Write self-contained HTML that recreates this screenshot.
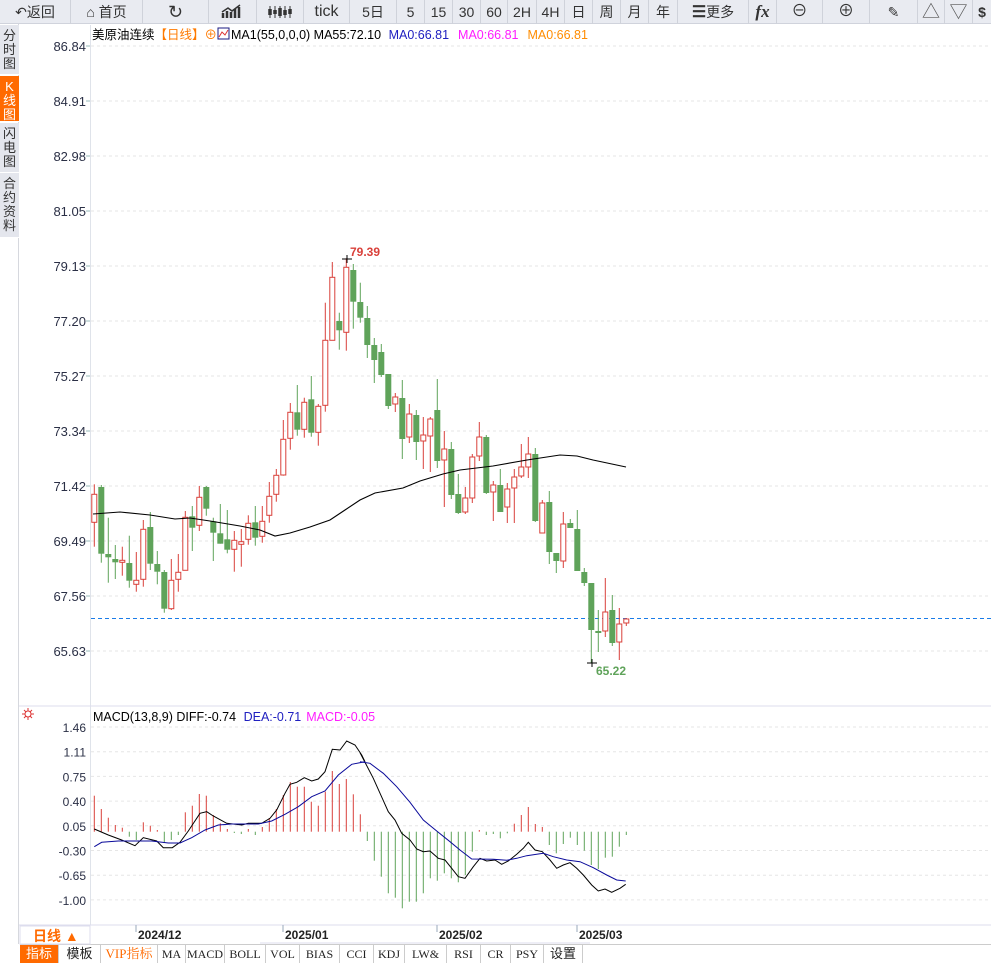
<!DOCTYPE html>
<html><head><meta charset="utf-8">
<style>
*{margin:0;padding:0;box-sizing:border-box}
body{width:991px;height:965px;overflow:hidden;background:#fff;font-family:"Liberation Sans","Noto Sans CJK SC",sans-serif;position:relative}
#tb{position:absolute;left:0;top:0;width:991px;height:24px;background:#e9ebf1;border-bottom:1px solid #d0d3dc}
#tb div{position:absolute;top:0;height:24px;border-right:1px solid #cfd2da;font-size:14px;color:#333;text-align:center;line-height:24px}
#side{position:absolute;left:0;top:24px;width:19px;height:920px;background:#fff;border-right:1px solid #d6d8de}
#side div{position:absolute;left:0;width:19px;background:#e4e6ed;font-size:13px;line-height:14px;text-align:center;color:#333;border-bottom:1px solid #fff;padding-top:4px}
#bt{position:absolute;left:20px;top:945px;height:18px;display:flex;font-family:"Liberation Serif","Noto Serif CJK SC",serif;font-size:12px}
#bt div{border-right:1px solid #ccc;text-align:center;line-height:18px;color:#222;background:#fff}
svg{position:absolute;left:0;top:0}
</style></head><body>
<div id="tb">
<div style="left:0;width:71px">↶返回</div>
<div style="left:71px;width:72px">⌂ 首页</div>
<div style="left:143px;width:66px;font-size:18px">↻</div>
<div style="left:209px;width:48px"><svg width="48" height="24" style="position:static"><path d="M14 18V13M18 18V11M22 18V12M26 18V9M30 18V7" stroke="#333" stroke-width="2.5"/><path d="M13 12L19 8L23 11L31 5" stroke="#333" fill="none" stroke-width="1.5"/></svg></div>
<div style="left:257px;width:47px"><svg width="47" height="24" style="position:static"><path d="M13 6V18M18 6V18M23 6V18M28 6V18M33 6V18" stroke="#333" stroke-width="1"/><path d="M13 9V15M18 10V14M23 8V16M28 10V15M33 9V14" stroke="#333" stroke-width="3.5"/></svg></div>
<div style="left:304px;width:46px;font-size:16px">tick</div>
<div style="left:350px;width:47px">5日</div>
<div style="left:397px;width:28px">5</div>
<div style="left:425px;width:28px">15</div>
<div style="left:453px;width:28px">30</div>
<div style="left:481px;width:27px">60</div>
<div style="left:508px;width:29px">2H</div>
<div style="left:537px;width:28px">4H</div>
<div style="left:565px;width:28px">日</div>
<div style="left:593px;width:28px">周</div>
<div style="left:621px;width:28px">月</div>
<div style="left:649px;width:29px">年</div>
<div style="left:678px;width:71px"><b style="font-size:16px">☰</b>更多</div>
<div style="left:749px;width:28px;font-family:'Liberation Serif',serif;font-style:italic;font-weight:bold;font-size:17px">fx</div>
<div style="left:777px;width:46px;font-size:16px">⊖</div>
<div style="left:823px;width:47px;font-size:16px">⊕</div>
<div style="left:870px;width:48px">✎</div>
<div style="left:918px;width:27px;font-size:18px;color:#555">△</div>
<div style="left:945px;width:28px;font-size:18px;color:#555">▽</div>
<div style="left:973px;width:18px;font-weight:bold;border:none">$</div>
</div>
<div id="side">
<div style="top:1px;height:50px">分<br>时<br>图</div>
<div style="top:52px;height:46px;background:#ff6a00;color:#fff">K<br>线<br>图</div>
<div style="top:99px;height:50px">闪<br>电<br>图</div>
<div style="top:149px;height:65px">合<br>约<br>资<br>料</div>
</div>
<svg id="s" width="991" height="965" style="left:0;top:0"></svg>
<div id="bt">
<div style="width:39px;background:#ff6a00;color:#fff;font-family:'Liberation Sans','Noto Sans CJK SC',sans-serif;font-size:13px">指标</div>
<div style="width:42px;font-family:'Liberation Sans','Noto Sans CJK SC',sans-serif;font-size:13px">模板</div>
<div style="width:57px;color:#ff6a00;font-size:13px">VIP指标</div>
<div style="width:28px">MA</div>
<div style="width:39px">MACD</div>
<div style="width:41px">BOLL</div>
<div style="width:34px">VOL</div>
<div style="width:40px">BIAS</div>
<div style="width:34px">CCI</div>
<div style="width:31px">KDJ</div>
<div style="width:42px">LW&amp;</div>
<div style="width:34px">RSI</div>
<div style="width:30px">CR</div>
<div style="width:33px">PSY</div>
<div style="width:39px;font-family:'Liberation Sans','Noto Sans CJK SC',sans-serif;font-size:13px">设置</div>
</div>
<script>
var C=[
['r',494.3,522.3,484.3,546.7],['g',487,553.7,485,562.7],['g',554,557.3,517.7,582.7],['g',559,562.3,545,579],['r',560.3,562.3,546.7,575.7],
['g',563,580.7,535.7,587.7],['r',580.3,584.3,552,591.7],['r',529.3,579.3,520,586.7],['g',527,563.7,512,570],['g',564,571.7,551,584.3],
['g',572,608.7,570,612.7],['r',580.3,608.7,559,610],['r',572.3,579.3,554,591.7],['r',517.3,570.3,511,570.3],['g',516.3,527.7,506,551],
['r',497.3,525.3,486,531],['g',487,508.7,486,515.7],['g',521.3,532.7,517.7,561],['g',533.3,543.7,504,543.7],['g',539.3,549.7,510,553.3],
['r',540.3,549.3,531,571.7],['r',541.7,544.3,529,566.7],['r',523.3,539.3,515.3,544.7],['g',522.3,537.7,506,545.7],['r',521.3,536.3,506,542.7],
['r',496.3,515.3,482,522.7],['r',475.3,494.3,469,501.7],['r',439.3,475,420,475.7],['r',412.3,438.3,403,449.7],['g',412.3,429.7,385,435.7],
['r',402.3,429.3,397.7,437.7],['g',399.3,432.7,376,436.7],['r',406.3,432.3,404,445.7],['r',340.3,405.3,302.7,411.7],['r',277.3,340.3,262,340.3],
['g',321,330.3,312.7,349.7],['r',267.3,332.3,258.3,350.7],['g',270,301.7,264,328.7],['g',302,317.7,282.7,322.7],['g',318,345,306,358],
['g',345,360,338,383],['g',352,375,344,377],['g',374,406,374,409],['r',397,404,393,412],['g',398,439,380,459],
['r',414,437,404,443],['g',415,442,410,460],['r',435,441,417,469],['r',419,436,417,472],['g',410,461,379,468],
['r',449,460,431,507],['g',449,495,442,499],['g',494,513,474,514],['r',498,512,487,514],['r',457,498,454,503],
['r',437,456,422,461],['g',437,493,435,494],['r',485,492,481,521],['g',485,512,469,512],['r',489,507,483,523],
['r',477,488,469,523],['r',467,476,444,478],['r',454,467,437,478],['g',454,521,448,522],['r',503,533,500,533],
['g',502,552,491,564],['g',553,561,553,573],['r',524,561,512,568],['g',523,528,519,528],['g',529,571,510,571],
['g',572,583,568,586],['g',583,630,583,663],['g',631,633,610,652],['r',612,631,578,637],['g',610,643,595,646],
['r',624,642,608,660],['r',619,623,618,626]];
var H=[795.7,809,817.7,825,827.7,-836.7,-840,822.3,825.7,830,-842,-840,-835,812.3,805.7,794,795.7,815,823.3,829,-833,-834,829,-835,827,818,809,795,782,786.7,786.7,801.7,805.7,791.7,771,784,779,794.3,814.3,
-841,-860.7,-876.7,-893.3,-897.7,-908.3,-901.7,-901.7,-893.3,-878.3,-880.7,-873.3,-878.3,-882.3,-875,-851.7,830,-835,-834,-838.3,-833.3,823.7,815,807,824,827,-845,-853.3,-844,-837.7,-845,-850.7,-865,-869,-857.7,-856.7,-846.7,-835];
var o='';
var L=['86.84','84.91','82.98','81.05','79.13','77.20','75.27','73.34','71.42','69.49','67.56','65.63'];
for(var i=0;i<12;i++){var y=46+i*55;o+='<line x1="91" y1="'+y+'" x2="991" y2="'+y+'" stroke="#e6e6e6" stroke-dasharray="3,3"/><text x="86" y="'+(y+5)+'" font-size="13" text-anchor="end" fill="#2a2f45">'+L[i]+'</text><line x1="86" y1="'+y+'" x2="90" y2="'+y+'" stroke="#9bb" />';}
var M=['1.46','1.11','0.75','0.40','0.05','-0.30','-0.65','-1.00'];
for(i=0;i<8;i++){var y=727+i*24.7;o+='<line x1="91" y1="'+y+'" x2="991" y2="'+y+'" stroke="#e6e6e6" stroke-dasharray="3,3"/><text x="86" y="'+(y+5)+'" font-size="12" text-anchor="end" fill="#2a2f45">'+M[i]+'</text>';}
o+='<line x1="90.5" y1="25" x2="90.5" y2="925" stroke="#dfe3ea"/>';
o+='<line x1="19" y1="706" x2="991" y2="706" stroke="#dde"/><line x1="19" y1="925" x2="991" y2="925" stroke="#dde"/><line x1="20" y1="944.5" x2="991" y2="944.5" stroke="#ccc"/>';
o+='<line x1="91" y1="618.5" x2="991" y2="618.5" stroke="#1a7ce8" stroke-dasharray="4,3"/>';
for(i=0;i<C.length;i++){var c=C[i],x=94.3+7*i,col=c[0]=='r'?'#d9403a':'#5fa35a';
o+='<line x1="'+x+'" y1="'+c[3]+'" x2="'+x+'" y2="'+c[4]+'" stroke="'+col+'"/>';
var h=Math.max(c[2]-c[1],1.5);
if(c[0]=='r')o+='<rect x="'+(x-2.5)+'" y="'+c[1]+'" width="5" height="'+h+'" fill="#fff" stroke="'+col+'"/>';
else o+='<rect x="'+(x-3)+'" y="'+c[1]+'" width="6" height="'+h+'" fill="'+col+'"/>';}
o+='<polyline fill="none" stroke="#000" stroke-width="1.1" points="93,514 120,512 150,515 175,519 190,518 210,521 240,526 260,530 275,536 290,533 310,527 330,520 345,510 360,500 375,493 403,488 420,481 443,474 460,470 493,466 527,460 560,455 577,456 593,460 626,467"/>';
for(i=0;i<H.length;i++){var x=94.3+7*i,v=H[i],z=831.7;
if(v>0)o+='<line x1="'+x+'" y1="'+v+'" x2="'+x+'" y2="'+z+'" stroke="#d9403a"/>';else o+='<line x1="'+x+'" y1="'+z+'" x2="'+x+'" y2="'+(-v)+'" stroke="#5fa35a"/>';}
function pl(a,ox,col){var p='';for(var k=0;k<a.length;k+=2)p+=(ox+a[k]/3).toFixed(1)+','+(705+a[k+1]/3).toFixed(1)+' ';return '<polyline fill="none" stroke="'+col+'" points="'+p+'"/>';}
o+=pl([28,372,70,390,110,405,150,422,175,398,215,408,235,428,262,428,285,412,310,378,345,325,365,320,385,333,425,355,470,360,490,355,530,355,555,340,575,315,600,265,615,238,635,232,658,218,680,228,700,222,720,200,742,133,765,135,785,108,810,120,830,150,840,170],85,'#000');
o+=pl([0,143,40,220,85,320,105,345,125,385,150,405,170,432,190,440,210,438,235,460,255,465,275,490,295,515,315,520,340,485,360,460,380,468,405,465,425,478,445,468,470,448,490,430,505,412,525,435,547,440,570,465,590,490,610,480,630,473,650,490,670,510,695,540,715,558,735,552,755,562,780,550,797,538],360,'#000');
o+=pl([28,425,50,412,100,408,200,408,250,414,285,414,320,398,360,375,400,360,440,357,520,357,560,348,600,328,640,305,680,275,720,258,760,210,800,178,840,170],85,'#0a0a9a');
o+=pl([0,170,30,175,70,205,110,245,150,292,190,345,230,378,270,410,300,435,335,462,400,463,440,466,470,460,500,452,550,445,580,455,620,465,660,470,700,488,740,510,770,525,797,528],360,'#0a0a9a');
o+='<path d="M342 259H352M347 255V263M587 663H597M592 659V667" stroke="#000"/><text x="350" y="256" font-size="12" font-weight="bold" fill="#d9403a">79.39</text><text x="596" y="675" font-size="12" font-weight="bold" fill="#5fa35a">65.22</text>';
o+='<text x="92" y="39" font-size="12.5" fill="#000">美原油连续<tspan fill="#ff7a00">【日线】⊕</tspan></text>';
o+='<rect x="218" y="28" width="11" height="11" fill="#fff" stroke="#1a1a80"/><path d="M219 37L222 32L225 35L228 30" stroke="#d33" fill="none"/>';
o+='<text x="231" y="39" font-size="12.5" fill="#000">MA1(55,0,0,0) MA55:72.10 <tspan fill="#2020c0" dx="4">MA0:66.81</tspan><tspan fill="#ff1cff" dx="9">MA0:66.81</tspan><tspan fill="#ff8c00" dx="9">MA0:66.81</tspan></text>';
o+='<text x="93" y="721" font-size="12.5" fill="#000">MACD(13,8,9) DIFF:-0.74 <tspan fill="#2020c0" dx="4">DEA:-0.71</tspan><tspan fill="#ff1cff" dx="5">MACD:-0.05</tspan></text>';
o+='<circle cx="28" cy="714" r="3" fill="none" stroke="#d33"/><path d="M22 714h3M31 714h3M28 708v3M28 717v3M24 710l2 2M30 716l2 2M32 710l-2 2M24 718l2-2" stroke="#d33"/>';
o+='<rect x="20" y="926" width="70" height="18" fill="#fff" stroke="#dde"/><text x="33" y="941" font-size="14" font-weight="bold" fill="#ff6a00">日线 ▲</text>';
[[136,'2024/12'],[283,'2025/01'],[437,'2025/02'],[577,'2025/03']].forEach(function(t){o+='<line x1="'+t[0]+'" y1="925" x2="'+t[0]+'" y2="932" stroke="#9ab"/><text x="'+(t[0]+2)+'" y="939" font-size="12" font-weight="bold" fill="#222">'+t[1]+'</text>';});
o+='<line x1="260" y1="943" x2="590" y2="943" stroke="#dde"/>';
document.getElementById('s').innerHTML=o;
</script>
</body></html>
